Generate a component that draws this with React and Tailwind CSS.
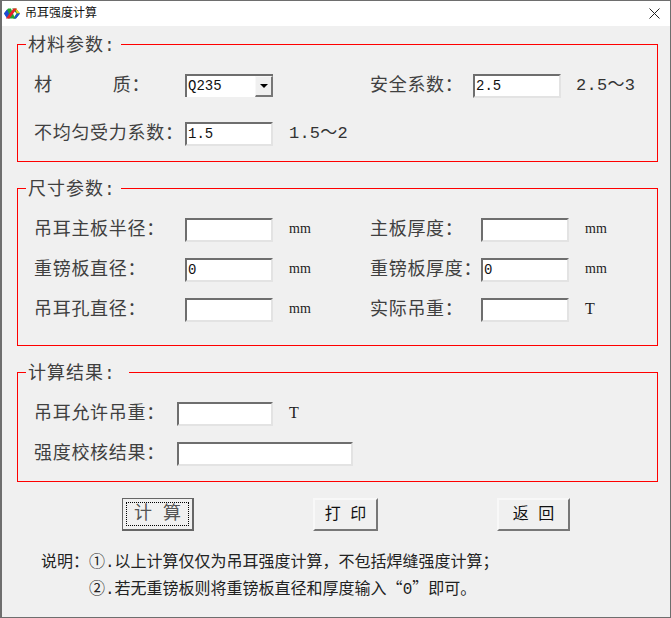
const FONT = "font-['Liberation_Mono','Noto_Sans_CJK_SC',monospace]";

const sunken = "box-border border-2 border-t-[#6e6e6e] border-l-[#6e6e6e] border-r-[#e3e3e3] border-b-[#e3e3e3] bg-white";

// Sunken edit box
function Field({ value = "", width = "w-[88px]" }) {
    return (
        <div className={`${sunken} h-6 ${width} flex items-center pl-[1px] text-[14px] leading-none text-[#111]`}>
            {value}
        </div>
    );
}

function Label({ children, width }) {
    return (
        <div className={`${width} shrink-0 text-[18px] tracking-[0.7px] leading-6 whitespace-pre text-[#404040]`}>
            {children}
        </div>
    );
}

function Unit({ children, size = "text-[14px]" }) {
    return <div className={`ml-4 font-['Liberation_Serif',serif] ${size} leading-[21px] text-[#222]`}>{children}</div>;
}

// Red group box, the caption sits over its top border
function Panel({ title, captionWidth, className, children }) {
    return (
        <div className={`relative border border-[#ff0000] pt-[29px] pl-4 flex flex-col ${className}`}>
            <div className={`absolute -top-[11px] left-[8px] ${captionWidth} h-6 bg-[#f0f0f0] pl-[2px] text-[18px] leading-6 tracking-[1px] text-[#404040] whitespace-pre`}>
                {title}
            </div>
            {children}
        </div>
    );
}

function Row({ left, right, className = "" }) {
    return (
        <div className={`flex h-6 ${className}`}>
            <div className="flex w-[336px] shrink-0">{left}</div>
            <div className="flex">{right}</div>
        </div>
    );
}

function AppIcon() {
    return (
        <svg width="16" height="11" viewBox="0 0 16 11" className="shrink-0">
            <path d="M0 5.5 L4 0.5 H7 L11 10.5 H4 Z" fill="#1fa52f" />
            <path d="M0 5.5 L3 1.5 L5 5.5 L3 10.5 Z" fill="#1f49d8" />
            <path d="M8 0.5 H12 L16 5.5 L12 10.5 H9 L12.5 5.5 Z" fill="#1fa52f" />
            <path d="M11 0.5 H12 L16 5.5 L13 5.5 Z" fill="#f4cc1c" />
            <path d="M16 5.5 L12 10.5 H10 L13 5.5 Z" fill="#1f49d8" />
            <path d="M2 10.5 L9.5 0.5 H13 L5.5 10.5 Z" fill="#e8202a" />
        </svg>
    );
}

function Button({ children, isDefault, textClass = "text-[16px]", className = "" }) {
    if (isDefault) {
        return (
            <div className={`box-border h-[33px] w-[72px] border border-[#666] border-r-2 border-b-2 bg-[#f0f0f0] p-[3px] ${className}`}>
                <div className={`h-full flex items-center justify-center border border-dotted border-black whitespace-pre text-[#555] ${textClass}`}>
                    {children}
                </div>
            </div>
        );
    }
    return (
        <div className={`box-border h-[33px] border-2 border-t-[#f8f8f8] border-l-[#f8f8f8] border-r-[#777] border-b-[#777] bg-[#f0f0f0] flex items-center justify-center whitespace-pre text-[#111] ${textClass} ${className}`}>
            {children}
        </div>
    );
}

export default function App() {
    return (
        <div className={`box-border h-[618px] w-[671px] overflow-hidden border border-[#6e6e6e] border-l-2 bg-[#f0f0f0] ${FONT}`}>
            {/* Title bar */}
            <div className="flex h-[25px] items-center bg-white pl-[2px]">
                <AppIcon />
                <div className="ml-[5px] text-[12px] text-[#111]">吊耳强度计算</div>
                <svg width="11" height="11" viewBox="0 0 11 11" className="ml-auto mr-[10px]">
                    <path d="M0.5 0.5 L10.5 10.5 M10.5 0.5 L0.5 10.5" stroke="#222" strokeWidth="1" fill="none" />
                </svg>
            </div>

            <div className="ml-[15px] mr-[12px] mt-[18px] w-[641px]">
                <Panel title="材料参数:" captionWidth="w-[95px]" className="h-[118px]">
                    <Row
                        left={
                            <>
                                <Label width="w-[151px]">
                                    <span className="mr-[60px]">材</span>质：
                                </Label>
                                <div className={`${sunken} h-[23px] w-[88px] flex items-center justify-between border-b-0 border-r-0 text-[14px] text-[#111]`}>
                                    <span className="pl-[1px]">Q235</span>
                                    <span className="box-border flex h-full w-[18px] items-center justify-center bg-[#f0f0f0] border border-t-[#f8f8f8] border-l-[#f8f8f8] border-r-2 border-b-2 border-r-[#777] border-b-[#777]">
                                        <span className="h-0 w-0 border-x-[4px] border-t-[4px] border-x-transparent border-t-black" />
                                    </span>
                                </div>
                            </>
                        }
                        right={
                            <>
                                <Label width="w-[103px]">安全系数：</Label>
                                <Field value="2.5" />
                                <div className="ml-[15px] text-[17px] tracking-[0.3px] leading-6 text-[#333]">2.5～3</div>
                            </>
                        }
                    />
                    <Row
                        className="mt-6"
                        left={
                            <>
                                <Label width="w-[151px]">不均匀受力系数：</Label>
                                <Field value="1.5" />
                                <div className="ml-4 text-[17px] tracking-[0.2px] leading-6 text-[#333] whitespace-nowrap">1.5～2</div>
                            </>
                        }
                    />
                </Panel>

                <Panel title="尺寸参数:" captionWidth="w-[95px]" className="mt-[26px] h-[158px]">
                    <Row
                        left={<><Label width="w-[151px]">吊耳主板半径：</Label><Field /><Unit>mm</Unit></>}
                        right={<><Label width="w-[111px]">主板厚度：</Label><Field /><Unit>mm</Unit></>}
                    />
                    <Row
                        className="mt-4"
                        left={<><Label width="w-[151px]">重镑板直径：</Label><Field value="0" /><Unit>mm</Unit></>}
                        right={<><Label width="w-[111px]">重镑板厚度：</Label><Field value="0" /><Unit>mm</Unit></>}
                    />
                    <Row
                        className="mt-4"
                        left={<><Label width="w-[151px]">吊耳孔直径：</Label><Field /><Unit>mm</Unit></>}
                        right={<><Label width="w-[111px]">实际吊重：</Label><Field /><Unit size="text-[16px]">T</Unit></>}
                    />
                </Panel>

                <Panel title="计算结果:" captionWidth="w-[103px]" className="mt-[26px] h-[110px]">
                    <Row left={<><Label width="w-[143px]">吊耳允许吊重：</Label><Field width="w-[96px]" /><Unit size="text-[16px]">T</Unit></>} />
                    <Row className="mt-4" left={<><Label width="w-[143px]">强度校核结果：</Label><Field width="w-[176px]" /></>} />
                </Panel>
            </div>

            <div className="ml-[120px] mt-[16px] flex">
                <Button isDefault textClass="text-[18px]">{"计 算"}</Button>
                <Button className="ml-[119px] w-[65px]">{"打 印"}</Button>
                <Button className="ml-[119px] w-[73px]">{"返 回"}</Button>
            </div>

            <div className="ml-[39px] mt-[20px] text-[16px] leading-6 text-[#222]">
                <div className="flex whitespace-nowrap">
                    <div className="w-[48px]">说明：</div>
                    <div>①.以上计算仅仅为吊耳强度计算，不包括焊缝强度计算；</div>
                </div>
                <div className="pl-[48px] whitespace-nowrap">
                    ②.若无重镑板则将重镑板直径和厚度输入<span className="font-['Noto_Sans_CJK_SC',sans-serif]">“</span>0<span className="font-['Noto_Sans_CJK_SC',sans-serif]">”</span>即可。
                </div>
            </div>
        </div>
    );
}
